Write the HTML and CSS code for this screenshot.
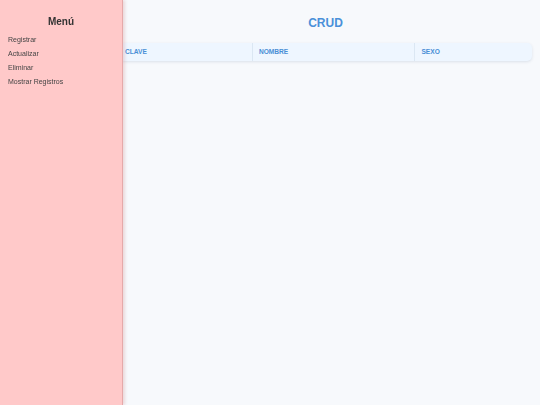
FILE: index.html
```html
<!DOCTYPE html>
<html lang="es">
<head>
<meta charset="utf-8">
<title>CRUD</title>
<link rel="stylesheet" href="styles.css">
</head>
<body>
<aside class="sidebar">
  <h2 class="menu-title">Menú</h2>
  <ul class="menu-list">
    <li>Registrar</li>
    <li>Actualizar</li>
    <li>Eliminar</li>
    <li>Mostrar Registros</li>
  </ul>
</aside>
<main class="main">
  <h1 class="title">CRUD</h1>
  <table class="grid">
    <thead>
      <tr><th>Clave</th><th>Nombre</th><th>Sexo</th></tr>
    </thead>
  </table>
</main>
</body>
</html>
```

FILE: styles.css
```css
html, body {
  margin: 0;
  padding: 0;
  height: 100%;
}
body {
  background: #f7f9fc;
  font-family: "Liberation Sans", Arial, sans-serif;
}
.sidebar {
  position: fixed;
  top: 0;
  left: 0;
  bottom: 0;
  width: 122px;
  background: #ffc9c9;
  border-right: 1px solid #e6a9a9;
  box-shadow: 2px 0 3px rgba(200, 120, 120, 0.25);
  padding-top: 16px;
  box-sizing: content-box;
  z-index: 2;
}
.menu-title {
  margin: 0;
  font-size: 10px;
  line-height: 12px;
  text-align: center;
  color: #333;
  font-weight: bold;
}
.menu-list {
  list-style: none;
  margin: 5px 0 0;
  padding: 0 0 0 8px;
  font-size: 7px;
  line-height: 14px;
  color: #444;
}
.main {
  margin: 0 8px 0 119px;
  padding-top: 16px;
}
.title {
  margin: 0 0 13px;
  font-size: 12px;
  line-height: 14px;
  text-align: center;
  color: #4a90d9;
  font-weight: bold;
}
.grid {
  width: 100%;
  border-collapse: separate;
  border-spacing: 0;
  background: #eef6ff;
  border-radius: 5px;
  box-shadow: 0 1px 3px rgba(60, 90, 130, 0.15);
}
.grid th {
  text-align: left;
  font-size: 6.6px;
  line-height: 10px;
  padding: 4px 6px;
  color: #4a8fd6;
  text-transform: uppercase;
  font-weight: bold;
  border-right: 1px solid #dbe7f3;
}
.grid th:last-child {
  border-right: none;
}
```
